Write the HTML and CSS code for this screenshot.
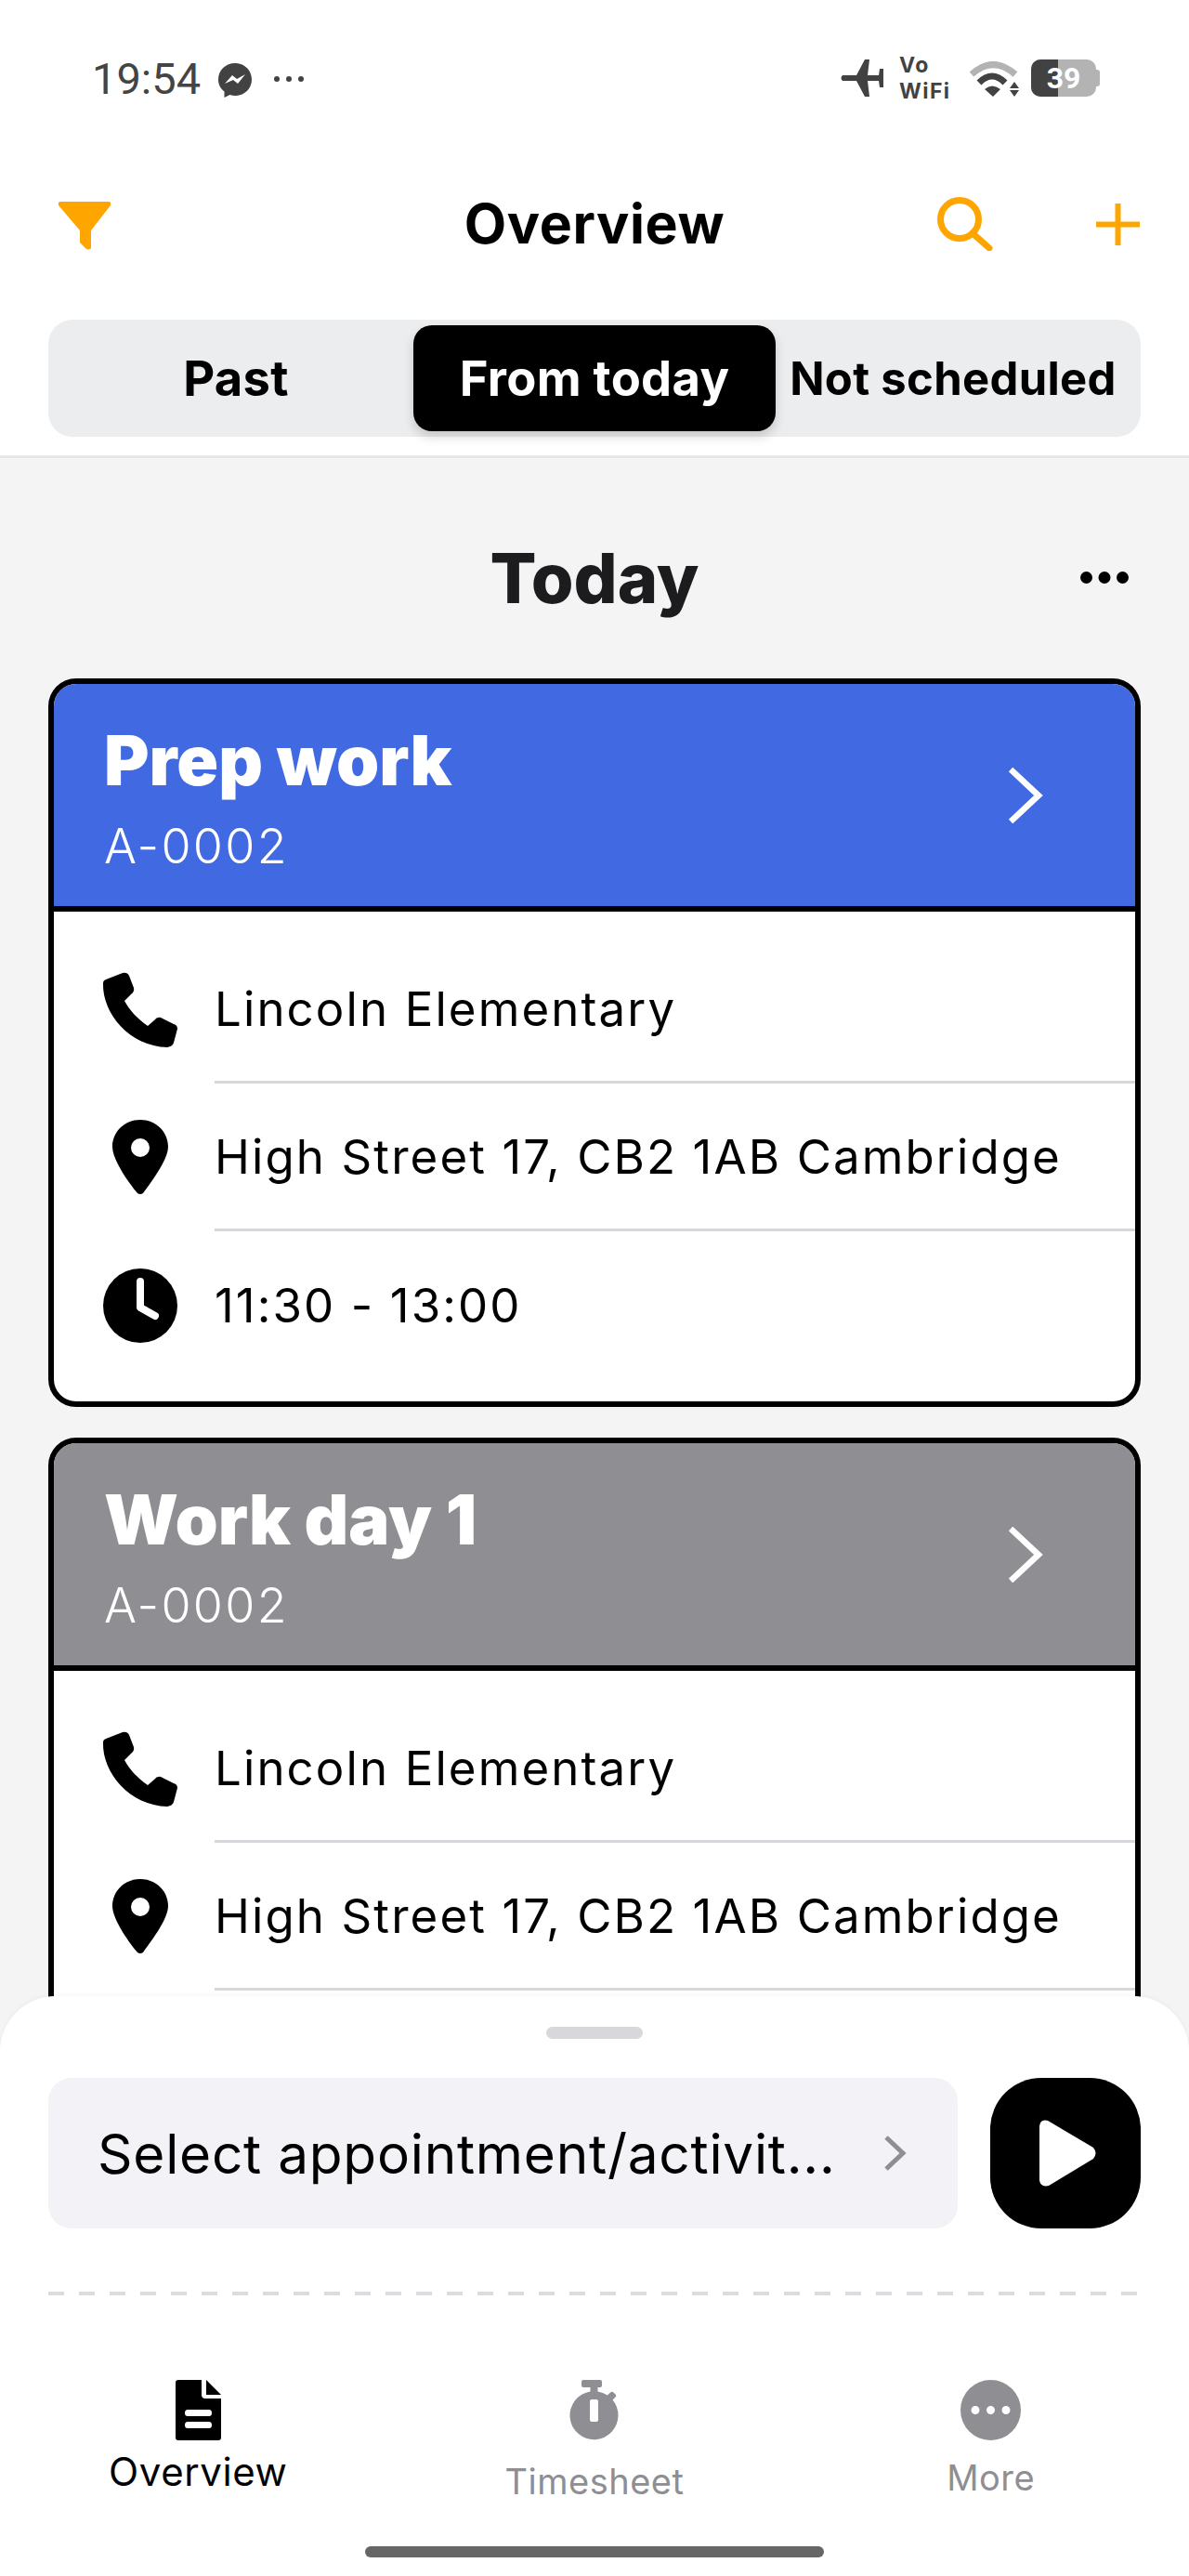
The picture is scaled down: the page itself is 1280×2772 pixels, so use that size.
FILE: index.html
```html
<!DOCTYPE html>
<html lang="en">
<head>
<meta charset="utf-8">
<title>Overview</title>
<link rel="stylesheet" href="styles.css">
</head>
<body>
<div class="phone">
  <header class="top">
    <div class="status">
      <div class="status-left">
        <span class="time">19:54</span>
        <svg class="messenger" viewBox="0 0 36 37"><path class="ic-dark" d="M18 0C8 0 0 7.500 0 17.500C0 23 2.500 27.500 6.500 30.500V37L12.500 34C14.300 34.600 16 35 18 35C28 35 36 27.500 36 17.500C36 7.500 28 0 18 0Z"/><path class="ic-white" d="M7 22L15 13L20 17L29 12L21 22L16 18Z"/></svg>
        <svg class="status-dots" viewBox="0 0 34 8"><circle class="ic-dark" cx="4" cy="4" r="3"/><circle class="ic-dark" cx="17" cy="4" r="3"/><circle class="ic-dark" cx="30" cy="4" r="3"/></svg>
      </div>
      <div class="status-right">
        <svg class="plane" viewBox="0 0 47 40"><path class="ic-dark" d="M3 17L18 17L27 0L32 0L30 17L42 17L43 10L47 10L47 30L43 30L42 23L30 23L32 40L27 40L18 23L3 23Q0 20 3 17Z"/></svg>
        <div class="vowifi"><span>Vo</span><span>WiFi</span></div>
        <svg class="wifi" viewBox="0 0 56 40"><path class="wifi-outer" d="M3 14Q26 -7 50 14"/><path class="wifi-inner" d="M11 23Q25 9 39 23"/><path class="ic-dark" d="M17 30Q25 23 34 30L26 38ZM49 22L54 29H44ZM44 31H54L49 38Z"/></svg>
        <div class="battery"><div class="battery-fill"></div><span class="battery-num">39</span><div class="battery-tip"></div></div>
      </div>
    </div>
    <nav class="nav">
      <svg class="ic-filter" viewBox="0 0 58 52"><path class="ic-orange" d="M3 0H55Q58 0 57 4L36 31V50Q33 53 30 50L24 44V31L1 4Q0 0 3 0Z"/></svg>
      <h1 class="nav-title">Overview</h1>
      <svg class="ic-search" viewBox="0 0 60 58"><circle class="stroke-orange" cx="24" cy="24" r="20.500"/><path class="stroke-orange" d="M38 39L56 55"/></svg>
      <svg class="ic-plus" viewBox="0 0 47 45"><path class="stroke-orange-thin" d="M23.500 0V45M0 22.500H47"/></svg>
    </nav>
    <div class="segments">
      <div class="segment seg-first">Past</div>
      <div class="segment active">From today</div>
      <div class="segment seg-last">Not scheduled</div>
    </div>
  </header>

  <main class="content">
    <div class="day-head">
      <h2 class="day-title">Today</h2>
      <svg class="day-more" viewBox="0 0 52 13"><circle cx="6.500" cy="6.500" r="6.500"/><circle cx="26" cy="6.500" r="6.500"/><circle cx="45.500" cy="6.500" r="6.500"/></svg>
    </div>

    <article class="card">
      <div class="card-head blue">
        <div><div class="card-title">Prep work</div><div class="card-code">A-0002</div></div>
        <svg class="card-chevron" viewBox="0 0 38 60"><path d="M2 2L32 30L2 58"/></svg>
      </div>
      <div class="card-body">
        <div class="row">
          <svg class="row-icon" viewBox="0 0 82 82"><path d="M4 8L22 1Q27 0 29 4L34 17Q35 21 31 24L24 31C30 42 38 50 49 58L56 52Q59 48 63 49L77 56Q81 57 81 61L77 76Q76 80 70 81C30 80 0 45 1 12Q1 9 4 8Z"/></svg>
          <div class="row-text">Lincoln Elementary</div>
        </div>
        <div class="row">
          <svg class="row-icon" viewBox="-11 0 82 82"><path fill-rule="evenodd" d="M30 0C47 0 60 13 60 29C60 44 40 69 33 79Q30 81 27 79C20 71 0 44 0 29C0 13 13 0 30 0ZM30 20A10 10 0 1 0 30 40A10 10 0 1 0 30 20Z"/></svg>
          <div class="row-text">High Street 17, CB2 1AB Cambridge</div>
        </div>
        <div class="row">
          <svg class="row-icon" viewBox="0 0 82 82"><circle cx="41" cy="41" r="40"/><path class="clock-hands" d="M41 15V43L57 52"/></svg>
          <div class="row-text">11:30 - 13:00</div>
        </div>
      </div>
    </article>

    <article class="card">
      <div class="card-head gray">
        <div><div class="card-title">Work day 1</div><div class="card-code">A-0002</div></div>
        <svg class="card-chevron" viewBox="0 0 38 60"><path d="M2 2L32 30L2 58"/></svg>
      </div>
      <div class="card-body">
        <div class="row">
          <svg class="row-icon" viewBox="0 0 82 82"><path d="M4 8L22 1Q27 0 29 4L34 17Q35 21 31 24L24 31C30 42 38 50 49 58L56 52Q59 48 63 49L77 56Q81 57 81 61L77 76Q76 80 70 81C30 80 0 45 1 12Q1 9 4 8Z"/></svg>
          <div class="row-text">Lincoln Elementary</div>
        </div>
        <div class="row">
          <svg class="row-icon" viewBox="-11 0 82 82"><path fill-rule="evenodd" d="M30 0C47 0 60 13 60 29C60 44 40 69 33 79Q30 81 27 79C20 71 0 44 0 29C0 13 13 0 30 0ZM30 20A10 10 0 1 0 30 40A10 10 0 1 0 30 20Z"/></svg>
          <div class="row-text">High Street 17, CB2 1AB Cambridge</div>
        </div>
        <div class="row">
          <svg class="row-icon" viewBox="0 0 82 82"><circle cx="41" cy="41" r="40"/><path class="clock-hands" d="M41 15V43L57 52"/></svg>
          <div class="row-text">11:30 - 13:00</div>
        </div>
      </div>
    </article>
  </main>

  <section class="sheet">
    <div class="handle"></div>
    <div class="timer-row">
      <div class="select">
        <span class="select-text">Select appointment/activit...</span>
        <svg class="select-chevron" viewBox="0 0 24 38"><path d="M2 2L20 19L2 36"/></svg>
      </div>
      <button class="play" type="button"><svg viewBox="0 0 62 72"><path d="M0 7Q1 -1 9 1L58 30Q63 36 58 42L10 71Q1 73 0 65Z"/></svg></button>
    </div>
    <div class="dashes"></div>
    <div class="tabs">
      <div class="tab tab-active">
        <svg class="tab-icon" viewBox="0 0 49 65"><path fill-rule="evenodd" d="M3 0H28V16Q28 20 32 20H49V62Q49 65 46 65H3Q0 65 0 62V3Q0 0 3 0ZM13 32Q10 32 10 35.500Q10 39 13 39H36Q39 39 39 35.500Q39 32 36 32ZM13 45Q10 45 10 48.500Q10 52 13 52H36Q39 52 39 48.500Q39 45 36 45Z"/><path d="M33 0L49 16H33Z"/></svg>
        <span class="tab-label">Overview</span>
      </div>
      <div class="tab tab-time">
        <svg class="tab-icon" viewBox="0 0 65 65"><path fill-rule="evenodd" d="M21 0H39Q41 0 41 2V6Q41 8 39 8H36.500V12.500Q42 13.500 47 16.500L50 13.500Q52 12 53.500 13.500L55.500 15.500Q57 17 55.500 18.500L52.500 21.500Q58.500 28.500 58.500 38.500A26 26 0 1 1 28.500 12.500V8H21Q19 8 19 6V2Q19 0 21 0ZM30 21Q28 21 28 23V43Q28 45 30 45H35Q37 45 37 43V23Q37 21 35 21Z"/></svg>
        <span class="tab-label">Timesheet</span>
      </div>
      <div class="tab tab-more">
        <svg class="tab-icon" viewBox="0 0 65 65"><path fill-rule="evenodd" d="M32.500 0A32.500 32.500 0 1 1 32.500 65A32.500 32.500 0 1 1 32.500 0ZM16 28A4.500 4.500 0 1 0 16 37A4.500 4.500 0 1 0 16 28ZM32.500 28A4.500 4.500 0 1 0 32.500 37A4.500 4.500 0 1 0 32.500 28ZM49 28A4.500 4.500 0 1 0 49 37A4.500 4.500 0 1 0 49 28Z"/></svg>
        <span class="tab-label">More</span>
      </div>
    </div>
    <div class="home-bar"></div>
  </section>
</div>
</body>
</html>
```

FILE: styles.css
```css
* { box-sizing: border-box; margin: 0; padding: 0; }
html, body { width: 1280px; height: 2772px; overflow: hidden; background: #fff; }
body { font-family: "Inter", "Liberation Sans", sans-serif; color: #000; }
svg { display: block; }

.phone { position: relative; width: 1280px; height: 2772px; display: flex; flex-direction: column; overflow: hidden; background: #f4f4f4; }

.top { background: #fff; border-bottom: 3px solid #e6e6e8; height: 493px; flex: none; }
.status { height: 180px; display: flex; justify-content: space-between; padding: 60px 100px 0 99px; }
.status-left { display: flex; align-items: flex-start; height: 50px; }
.time { font: 400 47px/50px "Roboto", sans-serif; color: #444; width: 136px; }
.messenger { width: 36px; height: 37px; margin-top: 8px; }
.status-dots { width: 34px; height: 8px; margin: 21px 0 0 23px; }
.ic-dark { fill: #424242; }
.ic-white { fill: #fff; }
.status-right { display: flex; align-items: flex-start; }
.plane { width: 47px; height: 40px; margin-top: 4px; }
.vowifi { display: flex; flex-direction: column; font: 700 23px/28px "Inter", sans-serif; color: #424242; margin: -4px 0 0 17px; width: 75px; letter-spacing: 1.400px; }
.wifi { width: 56px; height: 40px; margin-top: 6px; }
.wifi-outer { fill: none; stroke: #b3b3b3; stroke-width: 7; }
.wifi-inner { fill: none; stroke: #424242; stroke-width: 7; }
.battery { position: relative; width: 70px; height: 40px; margin: 4px 0 0 11px; background: #b3b3b3; border-radius: 10px; display: flex; }
.battery-fill { width: 29px; background: #424242; border-radius: 10px 0 0 10px; }
.battery-num { position: absolute; left: 16px; top: 0; width: 38px; text-align: center; font: 700 32px/40px "Roboto", sans-serif; color: #fff; }
.battery-tip { position: absolute; right: -4px; top: 11px; width: 4px; height: 18px; background: #b3b3b3; border-radius: 0 3px 3px 0; }

.nav { position: relative; height: 122px; display: flex; align-items: center; padding: 0 53px 0 62px; }
.nav-title { position: absolute; left: 0; right: 0; text-align: center; font-size: 59px; font-weight: 700; line-height: 122px; letter-spacing: 0.6px; }
.ic-filter { width: 58px; height: 52px; margin-top: 4px; }
.ic-search { width: 60px; height: 58px; margin-left: auto; }
.ic-plus { width: 47px; height: 45px; margin-left: 111px; }
.ic-orange { fill: #ffa500; }
.stroke-orange { fill: none; stroke: #ffa500; stroke-width: 7; stroke-linecap: round; }
.stroke-orange-thin { fill: none; stroke: #ffa500; stroke-width: 6; }

.segments { margin: 42px 52px 0; height: 126px; padding: 6px 3px; background: #ecedef; border-radius: 26px; display: grid; grid-template-columns: repeat(3, 1fr); }
.segment { display: flex; align-items: center; justify-content: center; font-size: 52.500px; font-weight: 700; border-radius: 20px; white-space: nowrap; letter-spacing: 0.3px; }
.segment.active { background: #000; color: #fff; box-shadow: 0 6px 12px rgba(0,0,0,0.16); }
.seg-first { padding-left: 8px; }
.seg-last { padding-right: 8px; font-size: 49px; }

.content { flex: 1; min-height: 0; padding: 0 52px; display: flex; flex-direction: column; gap: 33px; overflow: hidden; }
.day-head { position: relative; height: 237px; margin-bottom: -33px; flex: none; }
.day-title { position: absolute; left: 0; right: 0; top: 84px; text-align: center; font-size: 74px; line-height: 90px; font-weight: 800; color: #1c1c1e; }
.day-more { position: absolute; right: 13px; top: 122px; width: 52px; height: 13px; }

.card { flex: none; border: 6px solid #000; border-radius: 30px; background: #fff; overflow: hidden; }
.card-head { height: 245px; border-bottom: 6px solid #000; display: flex; align-items: center; justify-content: space-between; padding: 7px 98px 0 54px; color: #fff; }
.card-body { padding: 26px 0 24px; }
.blue { background: #4169e1; }
.gray { background: #8e8e93; }
.card-title { font-size: 74px; line-height: 80px; font-weight: 900; white-space: nowrap; }
.card-code { font-size: 52px; line-height: 60px; font-weight: 300; letter-spacing: 2.300px; margin-top: 23px; }
.card-chevron { width: 38px; height: 60px; margin-top: -7px; }
.card-chevron path { fill: none; stroke: #fff; stroke-width: 6.500; }

.row { display: flex; align-items: center; height: 159px; padding-left: 52px; }
.row-icon { width: 82px; height: 82px; flex: none; }
.row-text { flex: 1; height: 100%; margin-left: 39px; display: flex; align-items: center; font-size: 51px; letter-spacing: 2.100px; white-space: nowrap; border-bottom: 3px solid #d8d8dc; }
.row:last-child .row-text { border-bottom: 0; }
.clock-hands { fill: none; stroke: #fff; stroke-width: 8; stroke-linecap: round; stroke-linejoin: round; }

.sheet { position: absolute; left: 0; right: 0; top: 2148px; height: 624px; background: #fff; border-radius: 60px 60px 0 0; box-shadow: 0 -2px 4px rgba(0,0,0,0.03); padding-top: 33px; display: flex; flex-direction: column; }
.handle { width: 104px; height: 13px; border-radius: 7px; background: #d8d8dc; margin: 0 auto; }
.timer-row { display: flex; justify-content: space-between; margin: 42px 52px 0; height: 162px; }
.select { width: 979px; background: #f2f2f7; border-radius: 25px; display: flex; align-items: center; padding-left: 53px; }
.select-text { font-size: 58.500px; width: 847px; white-space: nowrap; letter-spacing: 0.750px; }
.select-chevron { width: 24px; height: 38px; }
.select-chevron path { fill: none; stroke: #8e8e93; stroke-width: 5; }
.play { width: 162px; height: 162px; border: 0; border-radius: 55px; background: #000; display: flex; align-items: center; justify-content: center; padding-left: 5px; }
.play svg { width: 62px; height: 72px; fill: #fff; }
.dashes { height: 4px; margin: 68px 52px 0; background: repeating-linear-gradient(90deg, #dcdce0 0 17px, transparent 17px 33px); }
.tabs { display: grid; grid-template-columns: repeat(3, 1fr); margin-top: 91px; }
.tab { display: flex; flex-direction: column; align-items: center; color: #8e8e93; fill: #8e8e93; font-size: 38px; letter-spacing: 0.500px; }
.tab-icon { height: 65px; width: 65px; }
.tab-active { color: #000; fill: #000; font-size: 42px; letter-spacing: 0.600px; }
.tab-active .tab-icon { width: 49px; }
.tab-label { line-height: 50px; white-space: nowrap; }
.tab-active .tab-label { margin-top: 9px; }
.tab-time .tab-label { margin-top: 19px; }
.tab-more .tab-label { margin-top: 15px; }
.home-bar { position: absolute; left: 393px; top: 592px; width: 494px; height: 12px; border-radius: 6px; background: #666; }
```
